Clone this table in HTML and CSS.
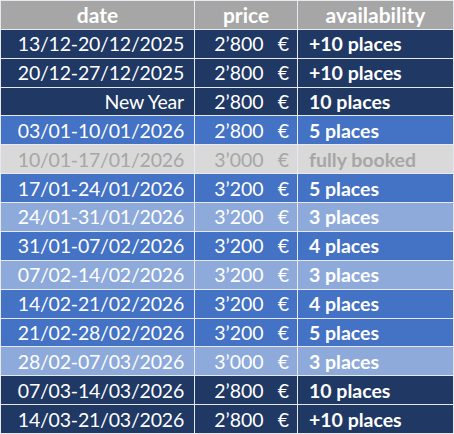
FILE: index.html
```html
<!DOCTYPE html>
<html>
<head>
<meta charset="utf-8">
<link rel="stylesheet" href="styles.css">
</head>
<body>
<div class="sheet">
  <div class="cell head">date</div><div class="cell head center">price</div><div class="cell head center">availability</div>

  <div class="cell date dark">13/12-20/12/2025</div><div class="cell price dark"><span>2’800</span><span class="eur">€</span></div><div class="cell avail dark">+10 places</div>
  <div class="cell date dark">20/12-27/12/2025</div><div class="cell price dark"><span>2’800</span><span class="eur">€</span></div><div class="cell avail dark">+10 places</div>
  <div class="cell date dark">New Year</div><div class="cell price dark"><span>2’800</span><span class="eur">€</span></div><div class="cell avail dark">10 places</div>
  <div class="cell date mid">03/01-10/01/2026</div><div class="cell price mid"><span>2’800</span><span class="eur">€</span></div><div class="cell avail mid">5 places</div>
  <div class="cell date gray">10/01-17/01/2026</div><div class="cell price gray"><span>3’000</span><span class="eur">€</span></div><div class="cell avail gray">fully booked</div>
  <div class="cell date mid">17/01-24/01/2026</div><div class="cell price mid"><span>3’200</span><span class="eur">€</span></div><div class="cell avail mid">5 places</div>
  <div class="cell date light">24/01-31/01/2026</div><div class="cell price light"><span>3’200</span><span class="eur">€</span></div><div class="cell avail light">3 places</div>
  <div class="cell date mid">31/01-07/02/2026</div><div class="cell price mid"><span>3’200</span><span class="eur">€</span></div><div class="cell avail mid">4 places</div>
  <div class="cell date light">07/02-14/02/2026</div><div class="cell price light"><span>3’200</span><span class="eur">€</span></div><div class="cell avail light">3 places</div>
  <div class="cell date mid">14/02-21/02/2026</div><div class="cell price mid"><span>3’200</span><span class="eur">€</span></div><div class="cell avail mid">4 places</div>
  <div class="cell date mid">21/02-28/02/2026</div><div class="cell price mid"><span>3’200</span><span class="eur">€</span></div><div class="cell avail mid">5 places</div>
  <div class="cell date light">28/02-07/03/2026</div><div class="cell price light"><span>3’000</span><span class="eur">€</span></div><div class="cell avail light">3 places</div>
  <div class="cell date dark">07/03-14/03/2026</div><div class="cell price dark"><span>2’800</span><span class="eur">€</span></div><div class="cell avail dark">10 places</div>
  <div class="cell date dark">14/03-21/03/2026</div><div class="cell price dark"><span>2’800</span><span class="eur">€</span></div><div class="cell avail dark">+10 places</div>
</div>
</body>
</html>
```
FILE: styles.css
```css
html, body {
  margin: 0;
  padding: 0;
  background: #ffffff;
}
.sheet {
  width: 454px;
  height: 434px;
  box-sizing: border-box;
  padding: 1px;
  display: grid;
  grid-template-columns: 193px 102px 155px;
  grid-template-rows: repeat(15, 1fr);
  gap: 1px;
  background: #e6e9ef;
  font-family: Lato, "Open Sans", sans-serif;
  font-size: 19.5px;
  color: #ffffff;
}
.cell {
  display: flex;
  align-items: center;
  white-space: nowrap;
  overflow: hidden;
}
.head {
  background: #a6a6a6;
  font-weight: bold;
  font-size: 21px;
  justify-content: center;
}
.date {
  justify-content: flex-end;
  padding-right: 10px;
  letter-spacing: -0.2px;
}
.price {
  justify-content: flex-end;
  padding-right: 8px;
}
.eur {
  margin-left: 14px;
}
.avail {
  font-weight: bold;
  padding-left: 11px;
}
.dark { background: #203864; }
.mid { background: #4472c4; }
.light { background: #8eaadb; }
.gray { background: #d9d9d9; color: #a6a6a6; }
```
